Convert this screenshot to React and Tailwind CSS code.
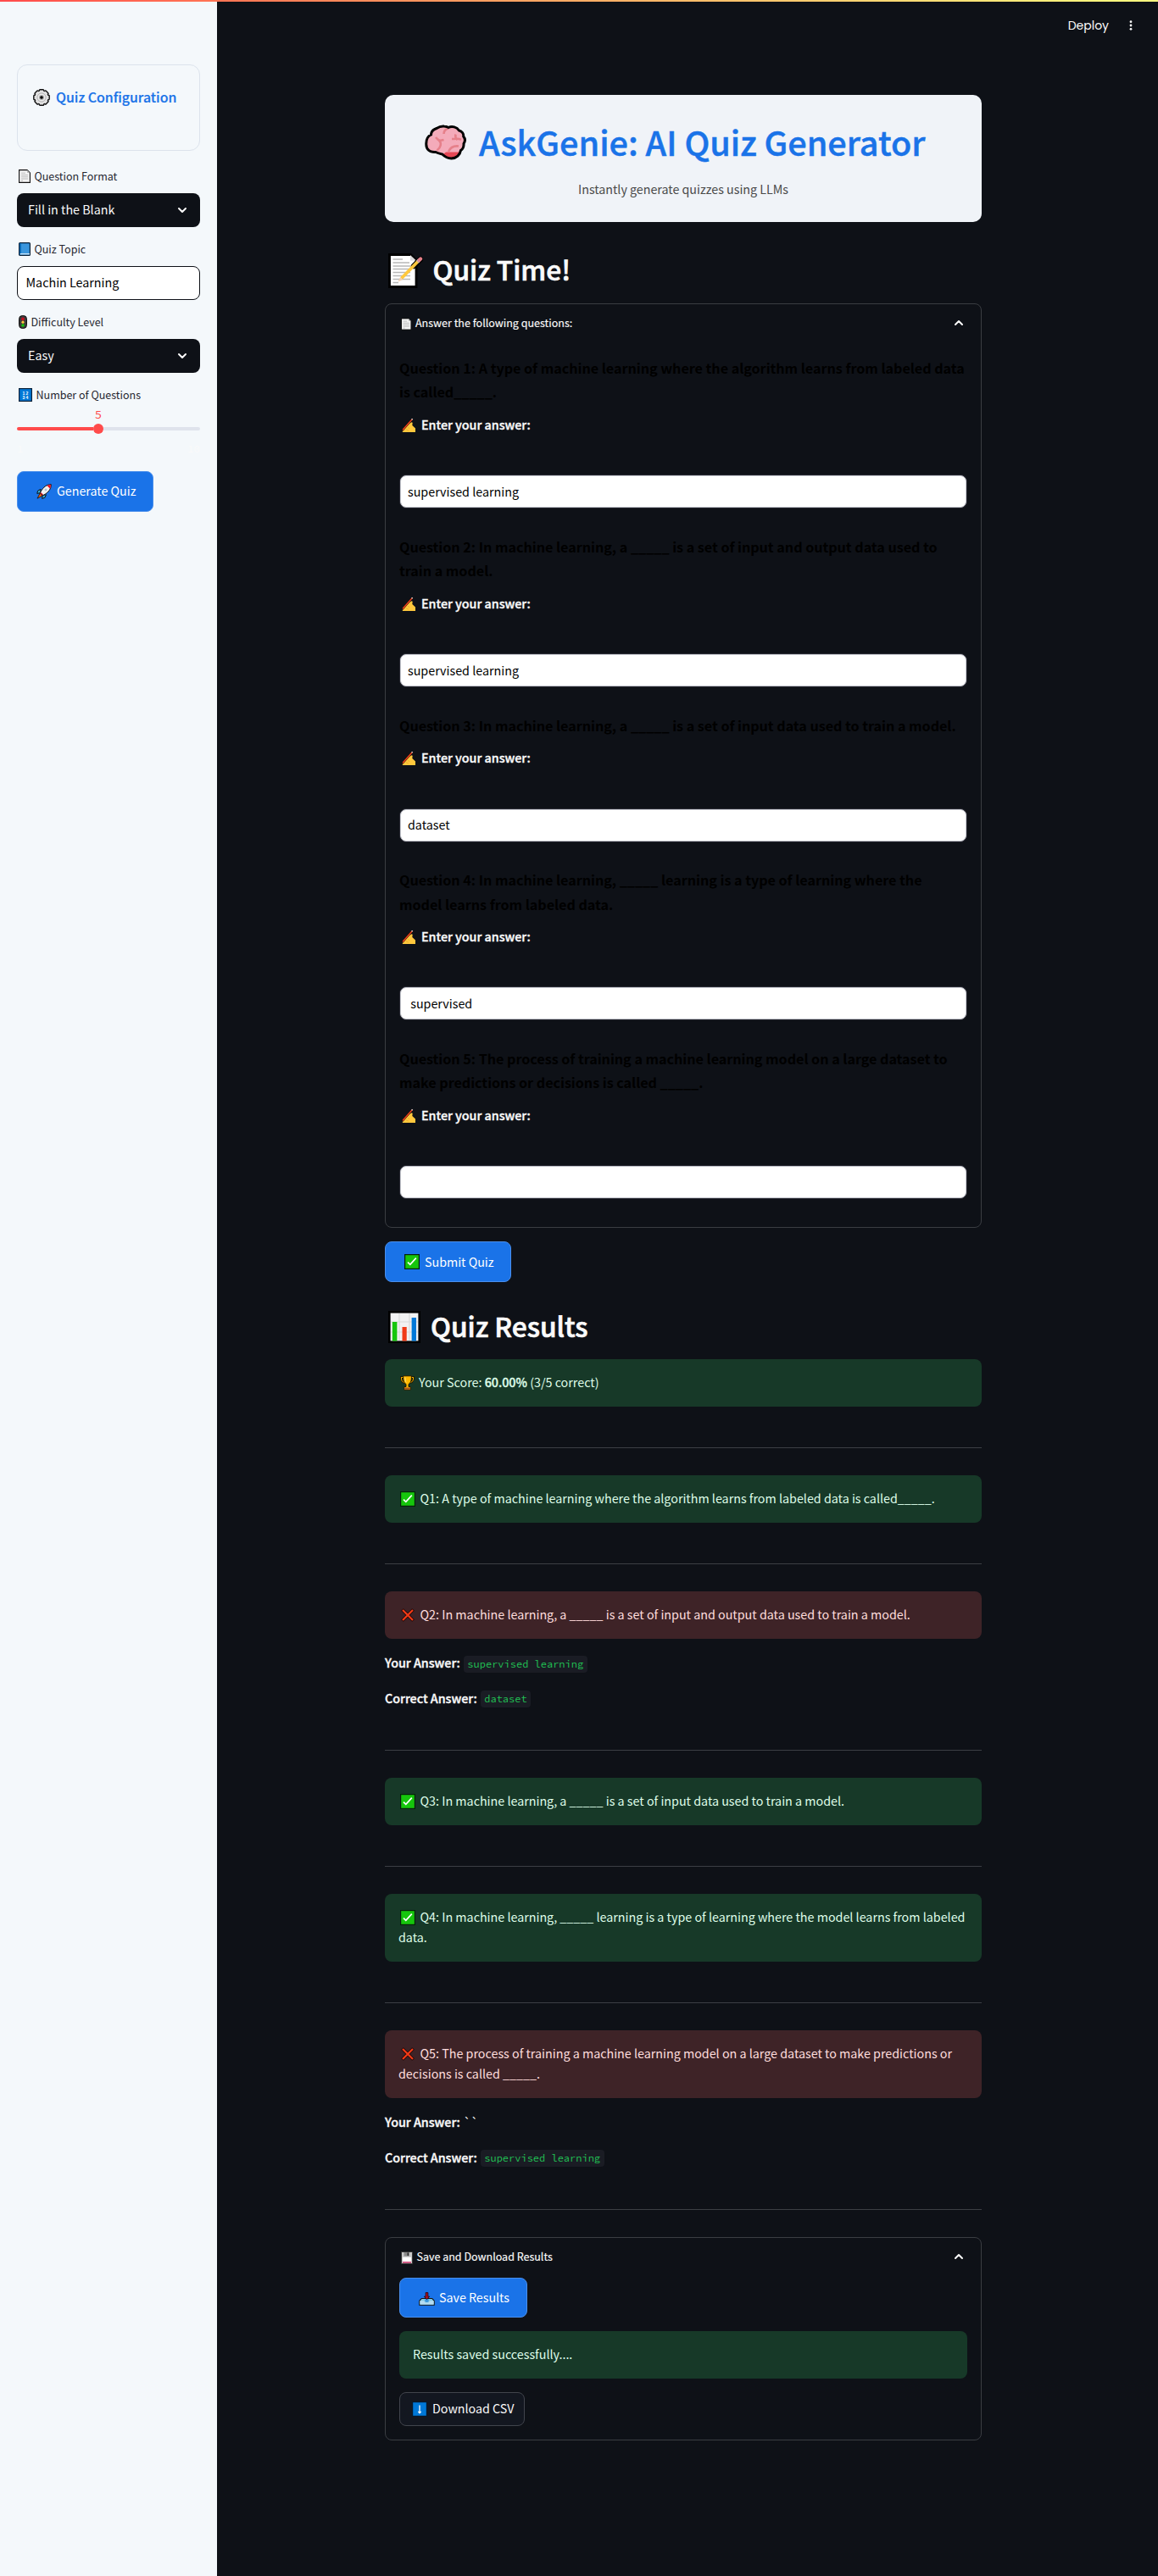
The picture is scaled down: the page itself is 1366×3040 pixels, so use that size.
import { ChevronDown, ChevronUp } from "lucide-react";

function GearIcon({ className }) {
  const teeth = [0, 45, 90, 135, 180, 225, 270, 315];
  return (
    <svg viewBox="0 0 20 20" className={className}>
      <g stroke="#111" strokeWidth="1.4" fill="#e0e0e0">
        {teeth.map((a) => (
          <rect key={a} x="7.3" y="0.8" width="5.4" height="4" rx="1" transform={`rotate(${a} 10 10)`} />
        ))}
      </g>
      <circle cx="10" cy="10" r="7.7" fill="#e0e0e0" />
      <circle cx="10" cy="10" r="5" fill="#ececec" stroke="#9a9a9a" strokeWidth="0.7" />
      <circle cx="10" cy="10" r="3" fill="#aaa" />
      <circle cx="10" cy="10" r="1.8" fill="#000" />
    </svg>
  );
}

function PageIcon({ className }) {
  return (
    <svg viewBox="0 0 14 16" className={className}>
      <path d="M.6.6H10l3.4 3.4v11.4H.6z" fill="#f4f4f4" stroke="#111" strokeWidth="1.1" />
      <path d="M10 .8V4h3.2z" fill="#bbb" />
      <path d="M3 4.2h5M3 6.6h8M3 8.8h8M3 11h8M3 13.2h2" stroke="#b3b3b3" strokeWidth=".9" />
    </svg>
  );
}

function BookIcon({ className }) {
  return (
    <svg viewBox="0 0 14 16" className={className}>
      <rect x=".6" y=".6" width="12.8" height="14.8" rx="1" fill="#3a96dd" stroke="#0b2239" strokeWidth="1.2" />
      <path d="M1.2 1.2h1.6V13H1.2z" fill="#0063b1" />
      <path d="M2 13.700h11" stroke="#d8ecfa" strokeWidth="1.2" />
    </svg>
  );
}

function TrafficIcon({ className }) {
  return (
    <svg viewBox="0 0 10 16" className={className}>
      <rect x=".5" y=".5" width="9" height="15" rx="4" fill="#3b3b3b" stroke="#111" />
      <circle cx="5" cy="4.4" r="1.9" fill="#c50f1f" />
      <circle cx="5" cy="8.2" r="1.6" fill="#ffc83d" />
      <circle cx="5" cy="12" r="1.8" fill="#16c60c" />
    </svg>
  );
}

function NumbersIcon({ className }) {
  return (
    <svg viewBox="0 0 16 16" className={className}>
      <rect x=".6" y=".6" width="14.8" height="14.8" fill="#0078d7" stroke="#0b2239" strokeWidth="1.2" />
      <g fill="#fff" fontFamily="Liberation Sans" fontSize="5" fontWeight="700">
        <text x="4.6" y="7.6">1</text>
        <text x="8.6" y="7.6">2</text>
        <text x="4.6" y="12.8">3</text>
        <text x="8.6" y="12.8">4</text>
      </g>
    </svg>
  );
}

function RocketIcon({ className }) {
  return (
    <svg viewBox="0 0 18 18" className={className}>
      <path d="M5 6.4 1.6 8.2.8 11.4l4-.8zM11.4 12.8 9.8 16.4l-3.2.9.8-4z" fill="#31b5e8" stroke="#111" strokeWidth="1" />
      <path d="M4.2 11 1 17.2l6-3.2z" fill="#f7630c" stroke="#111" strokeWidth=".8" />
      <path d="M17.3.7c-5 0-9 2.600-12.800 9.500l3.400 3.400C14.900 9.700 17.300 5.700 17.300.7z" fill="#f2f2f2" stroke="#111" strokeWidth="1" />
      <path d="M17 1c-1.700 0-3.300.3-4.700.9l3.800 3.800C16.700 4.200 17 2.700 17 1z" fill="#e81224" />
      <circle cx="11" cy="7" r="1.500" fill="#b4c6d1" />
      <path d="m5 10.600 2.500 2.500" stroke="#e81224" strokeWidth="1.200" />
    </svg>
  );
}

function BrainIcon({ className }) {
  return (
    <svg viewBox="0 0 49 42" className={className}>
      <path d="M14 4.500C17 2.500 20 1.600 23 2c2.500.2 4 .6 5 1.500 4-2 10-.8 12.500 3.500 3.500.8 5.500 4 5.200 7 2.200 2.600 2 6 .3 8.500.3 4-1 6.500-3.500 8-.8 5-5 9.300-11 9.500-5.200-.2-8.200-2.500-10.500-4.800C17 34 15 33.500 13 32.500 6 33 1.800 29.500 1.800 23.500c-.3-6 1.200-9.500 5.700-11.500C7.500 9 10 5.800 14 4.500z" fill="#f4abba" />
      <path d="M25 32.500h17.500c-1.500 4.500-5.500 7.500-11 7.500-5 0-8-2-10.200-4.400z" fill="#e74856" />
      <g fill="none" stroke="#e6808a" strokeWidth="2.600">
        <path d="M22.500 11c0-3 2-5.500 5.500-6.500M13 15c3.500 4.800 6 4 9.500 3M16.500 18c4 4 2.500 9-2 12.500M32 17c5 .3 7-1.500 11 .8M36.500 11.500c-1 3 0 4.500 2 6.500M28 32c2-4.500 6-7.200 12-6.500" />
      </g>
      <path d="M14 4.500C17 2.500 20 1.600 23 2c2.500.2 4 .6 5 1.500 4-2 10-.8 12.500 3.500 3.500.8 5.500 4 5.200 7 2.200 2.600 2 6 .3 8.500.3 4-1 6.500-3.500 8-.8 5-5 9.300-11 9.500-5.200-.2-8.200-2.500-10.500-4.800C17 34 15 33.500 13 32.500 6 33 1.800 29.500 1.800 23.500c-.3-6 1.200-9.500 5.700-11.500C7.500 9 10 5.800 14 4.500z" fill="none" stroke="#000" strokeWidth="3" />
    </svg>
  );
}

function MemoIcon({ className }) {
  return (
    <svg viewBox="0 0 41 41" className={className}>
      <path d="M1.500 1.500H26.500l6.500 6.500v31.500H1.500z" fill="#fff" stroke="#000" strokeWidth="2.800" />
      <path d="M26 2v6.500h7z" fill="#ddd" />
      <path d="M5.500 7H17M5.500 11H25M5.500 15H26M5.500 18.500H26M5.500 22.500H26M5.500 26.500H26M5.500 30.500H26M5.500 34.500H12" stroke="#b8b8b8" strokeWidth="1.300" />
      <path d="M38 7 30 15" stroke="#000" strokeWidth="6.500" strokeLinecap="round" />
      <path d="M36 8.500 15.500 29.500" stroke="#ffc83d" strokeWidth="3.800" />
      <path d="m11.500 33.500 2.600-5.500 3 3z" fill="#f3d0b0" />
      <path d="m34.500 10 2-2" stroke="#b8b8b8" strokeWidth="4" />
      <path d="m36.500 8 1.600-1.600" stroke="#e6808a" strokeWidth="4.200" strokeLinecap="round" />
    </svg>
  );
}

function HandIcon({ className }) {
  return (
    <svg viewBox="0 0 18 18" className={className}>
      <path d="M2 13 9 5.500l1.800 1L12 5.200l1.700.6-.4 3.200 3.700 3.500V17H1.800z" fill="#ffc83d" />
      <path d="m6 13.500 3 1.800M8 11.300l2.200 1.500" stroke="#e8a92a" strokeWidth=".8" />
      <path d="M13.400 1.500 1.600 15" stroke="#000" strokeWidth="2.200" />
      <path d="M13.200 1.800 2 14.600" stroke="#f0401c" strokeWidth="1.500" />
      <path d="m13.600 1.300-.9 1.100" stroke="#ddd" strokeWidth="1.500" />
    </svg>
  );
}

function CheckIcon({ className }) {
  return (
    <svg viewBox="0 0 18 18" className={className}>
      <rect x=".6" y=".6" width="16.800" height="16.800" fill="#16c60c" stroke="#06210a" strokeWidth="1.200" />
      <path d="m4 9.600 2.800 2.700 7-7.600" fill="none" stroke="#fff" strokeWidth="1.700" />
    </svg>
  );
}

function CrossIcon({ className }) {
  return (
    <svg viewBox="0 0 18 18" className={className}>
      <path d="m2.500 2.500 13 13M15.500 2.500l-13 13" stroke="#1a0505" strokeWidth="3.800" />
      <path d="m3 3 12 12M15 3 3 15" stroke="#f03a17" strokeWidth="2.300" />
    </svg>
  );
}

function ChartIcon({ className }) {
  return (
    <svg viewBox="0 0 38 38" className={className}>
      <rect x="1.300" y="1.300" width="35.400" height="35.400" fill="#f2f2f2" stroke="#000" strokeWidth="2.600" />
      <path d="M13 3v32M25 3v32M3 13h32M3 25h32" stroke="#dadada" strokeWidth="1.200" />
      <rect x="4.800" y="13" width="5.600" height="22.500" fill="#16c60c" />
      <rect x="16.500" y="19" width="5.200" height="16.500" fill="#f03a17" />
      <rect x="27.600" y="8" width="5.400" height="27.500" fill="#0078d7" />
    </svg>
  );
}

function TrophyIcon({ className }) {
  return (
    <svg viewBox="0 0 17 18" className={className}>
      <path d="M4 2.500H1.400c0 3.500 1 5.500 3.600 6M13 2.500h2.600c0 3.500-1 5.500-3.600 6" fill="none" stroke="#1a1200" strokeWidth="2.400" />
      <path d="M4 2.500H1.400c0 3.500 1 5.500 3.600 6M13 2.500h2.600c0 3.500-1 5.500-3.600 6" fill="none" stroke="#ffb900" strokeWidth="1" />
      <path d="M3.600.8h9.800c0 5-.4 8.200-3.400 9.700v3h2.200v3.700H4.800v-3.700H7v-3C4 9 3.600 5.800 3.600.8z" fill="#ffb900" stroke="#1a1200" strokeWidth=".9" />
      <path d="M5 14.500h7v2.300H5z" fill="#a4551e" />
      <path d="M6 2.500c0 3 .3 5 1.200 6" stroke="#ffe28a" fill="none" />
    </svg>
  );
}

function FloppyIcon({ className }) {
  return (
    <svg viewBox="0 0 14 15" className={className}>
      <path d="M.5.500H13l.5.800v13.200H.5z" fill="#c8c8c8" stroke="#333" />
      <path d="M3.500 1h6.500v4.500H3.500z" fill="#8a8a8a" />
      <path d="M7.500 1.500H9V5H7.500z" fill="#333" />
      <path d="M2 6.800h10v5.200H2z" fill="#fff" />
      <path d="M2 12h10v1.600H2z" fill="#d13f76" />
    </svg>
  );
}

function InboxIcon({ className }) {
  return (
    <svg viewBox="0 0 19 16" className={className}>
      <path d="m3.300 7.500-2.500 2.800v4.900h17.400v-4.900l-2.500-2.800z" fill="#83cbe8" stroke="#111" strokeWidth="1.100" />
      <path d="M1.400 10.300h4.800l1 2h4.600l1-2h4.800v4.300H1.400z" fill="#b4dcf2" />
      <circle cx="9.500" cy="9.700" r="2.300" fill="#3a96dd" />
      <path d="M8.100.6h2.800v4.600h1.800L9.500 8.500 6.300 5.200h1.800z" fill="#a80d1c" stroke="#2a0004" strokeWidth=".8" />
    </svg>
  );
}

function DownIcon({ className }) {
  return (
    <svg viewBox="0 0 18 18" className={className}>
      <rect x=".6" y=".6" width="16.800" height="16.800" fill="#0078d7" stroke="#06182b" strokeWidth="1.200" />
      <path d="M9 4.500v9M7.300 11.900 9 13.700l1.700-1.800" fill="none" stroke="#fff" strokeWidth="1.300" />
    </svg>
  );
}

const questions = [
  { n: 1, text: "A type of machine learning where the algorithm learns from labeled data is called_____.", value: "supervised learning", ok: true },
  { n: 2, text: "In machine learning, a _____ is a set of input and output data used to train a model.", value: "supervised learning", ok: false, answer: "dataset" },
  { n: 3, text: "In machine learning, a _____ is a set of input data used to train a model.", value: "dataset", ok: true },
  { n: 4, text: "In machine learning, _____ learning is a type of learning where the model learns from labeled data.", value: "\u00a0supervised", ok: true },
  { n: 5, text: "The process of training a machine learning model on a large dataset to make predictions or decisions is called _____.", value: "", ok: false, answer: "supervised learning" },
];

function SelectBox({ children }) {
  return (
    <div className="flex h-10 items-center justify-between rounded-lg bg-[#0e1117] px-[13px] text-[14.3px] text-[#fafafa]">
      <span className="pb-[2px]">{children}</span>
      <ChevronDown className="h-4 w-4" strokeWidth={3} />
    </div>
  );
}

function Label({ icon, children }) {
  return (
    <div className="flex h-[22px] items-center gap-[5px] pl-[1.5px] text-[12.5px] text-[#262730]">
      {icon}
      <span>{children}</span>
    </div>
  );
}

function Sidebar() {
  return (
    <aside className="w-64 shrink-0 bg-[#f4f8fb] px-5 pt-[76px]">
      <div className="h-[102px] rounded-xl border border-[#dce3ec] pt-[26px] pl-[18px]">
        <div className="flex h-[24px] items-center gap-[7px] text-[15.9px] font-medium whitespace-nowrap text-[#1a73e8] [-webkit-text-stroke:0.2px]">
          <GearIcon className="h-5 w-5" />
          <span className="pb-px">Quiz Configuration</span>
        </div>
      </div>
      <div className="mt-[19px]">
        <Label icon={<PageIcon className="h-4 w-[14px]" />}>Question Format</Label>
      </div>
      <div className="mt-[9px]">
        <SelectBox>Fill in the Blank</SelectBox>
      </div>
      <div className="mt-[15px]">
        <Label icon={<BookIcon className="h-4 w-[14px]" />}>Quiz Topic</Label>
      </div>
      <div className="mt-[9px] flex h-10 items-center rounded-lg border border-[#0e1117] bg-white pl-[9.5px] text-[14.3px] text-black">
        <span className="pb-[2px]">Machin Learning</span>
      </div>
      <div className="mt-[15px]">
        <Label icon={<TrafficIcon className="h-4 w-[10px]" />}>Difficulty Level</Label>
      </div>
      <div className="mt-[9px]">
        <SelectBox>Easy</SelectBox>
      </div>
      <div className="mt-[15px]">
        <Label icon={<NumbersIcon className="h-4 w-4" />}>Number of Questions</Label>
      </div>
      <div className="mt-[2px] w-[192px] text-center font-['Source_Code_Pro','Noto_Sans_Mono_CJK_SC',monospace] text-[14px] leading-[20px] text-[#ff4b4b]">
        5
      </div>
      <div className="mt-[1px] flex h-3 items-center">
        <div className="h-1 w-[90px] rounded-l-full bg-[#ff4b4b]" />
        <div className="h-3 w-3 rounded-full bg-[#ff4b4b]" />
        <div className="h-1 flex-1 rounded-r-full bg-[#dfe3ec]" />
      </div>
      <div className="mt-[8px] flex h-[20px] items-center justify-between font-['Source_Code_Pro','Noto_Sans_Mono_CJK_SC',monospace] text-[12.500px] text-[#fafafa]">
        <span>1</span>
        <span>10</span>
      </div>
      <div className="mt-[16px] flex h-12 w-[161px] items-center gap-[6px] rounded-lg border border-[#4a8fec] bg-[#1a73e8] pl-[22px] text-[14.25px] text-white">
        <RocketIcon className="h-[18px] w-[18px]" />
        <span className="pb-[2px]">Generate Quiz</span>
      </div>
    </aside>
  );
}

function Question({ q }) {
  return (
    <div className="mb-[30.200px]">
      <p className="text-[16.1px] leading-[28.8px] font-bold text-black">
        Question {q.n}: {q.text}
      </p>
      <div className="mt-[13px] mb-[46.200px] flex h-6 items-center gap-[6px] pl-[2px] text-[14.300px] font-medium text-[#fafafa] [-webkit-text-stroke:0.350px]">
        <HandIcon className="h-[18px] w-[18px]" />
        <span className="pb-[3px]">Enter your answer:</span>
      </div>
      <div className="flex h-10 items-center rounded-lg border border-[#262730] bg-[#262730]">
        <div className="flex h-full w-full items-center rounded-[7px] border border-[#c9cbd2] bg-white pl-[8px] text-[14.300px] text-black">
          <span className="pb-[2px]">{q.value}</span>
        </div>
      </div>
    </div>
  );
}

function Alert({ ok, icon, children }) {
  return (
    <div
      className={
        ok
          ? "rounded-lg bg-[#173928] px-4 pt-[15px] pb-[17px] text-[14.3px] leading-6 text-[#dffde9]"
          : "rounded-lg bg-[#3e2327] px-4 pt-[15px] pb-[17px] text-[14.3px] leading-6 text-[#ffdede]"
      }
    >
      {icon}
      {children}
    </div>
  );
}

function Code({ children }) {
  return (
    <code className="ml-[4px] inline-flex h-[20px] items-center rounded bg-[#1a1c24] px-[4.500px] font-['Source_Code_Pro','Noto_Sans_Mono_CJK_SC',monospace] text-[12px] text-[#21c354]">
      {children}
    </code>
  );
}

function Result({ q }) {
  return (
    <>
      <Alert
        ok={q.ok}
        icon={
          q.ok ? (
            <CheckIcon className="mr-[5.500px] ml-[2px] inline-block h-[18px] w-[18px] align-[-3.500px]" />
          ) : (
            <CrossIcon className="mr-[5.500px] ml-[2px] inline-block h-[18px] w-[18px] align-[-3.500px]" />
          )
        }
      >
        Q{q.n}: {q.text}
      </Alert>
      {q.ok ? (
        <hr className="mt-12 mb-8 border-t border-[#3c3f44]" />
      ) : (
        <>
          <div className="mt-4 flex h-[27px] items-center text-[14.300px] text-[#fafafa]">
            <span className="pb-[3px] font-medium [-webkit-text-stroke:0.350px]">Your Answer:</span>
            {q.value ? <Code>{q.value}</Code> : <span className="ml-[4px] pb-[3px]">``</span>}
          </div>
          <div className="mt-[15px] flex h-[26px] items-center text-[14.300px] text-[#fafafa]">
            <span className="pb-[2px] font-medium [-webkit-text-stroke:0.350px]">Correct Answer:</span>
            <Code>{q.answer}</Code>
          </div>
          <hr className="mt-[47px] mb-8 border-t border-[#3c3f44]" />
        </>
      )}
    </>
  );
}

function SummaryRow({ icon, children }) {
  return (
    <div className="flex h-[46px] items-center gap-[5px] pr-[19px] pl-[17.5px] text-[12.5px] text-[#fafafa] [-webkit-text-stroke:0.15px]">
      {icon}
      <span className="flex-1 pb-[2px]">{children}</span>
      <ChevronUp className="-mr-[1px] mb-[2px] h-4 w-4" strokeWidth={3} />
    </div>
  );
}

export default function App() {
  return (
    <div className="relative flex h-[3040px] w-[1366px] overflow-hidden bg-[#0e1117] font-['Noto_Sans_CJK_SC','Open_Sans',sans-serif]">
      <div className="absolute top-0 left-0 h-[2px] w-full bg-linear-to-r from-[#ff4b4b] to-[#fffd80]" />
      <Sidebar />
      <main className="flex-1">
        <header className="flex h-[60px] items-center justify-end pr-[30px] text-[#fafafa]">
          <span className="font-['Poppins','Inter',sans-serif] text-[14px]">Deploy</span>
          <svg viewBox="0 0 4 12" className="ml-[24px] h-3 w-1" fill="#fafafa">
            <circle cx="2" cy="1.700" r="1.400" />
            <circle cx="2" cy="6" r="1.400" />
            <circle cx="2" cy="10.300" r="1.400" />
          </svg>
        </header>
        <div className="ml-[198px] w-[704px] pt-[52px]">
          <section className="h-[150px] rounded-[10px] bg-[#f0f3f8] pt-[26px]">
            <div className="flex h-[60px] items-center gap-[15px] pl-[47px] text-[39.600px] font-medium whitespace-nowrap text-[#1a73e8] [-webkit-text-stroke:0.500px]">
              <BrainIcon className="h-[42px] w-[49px]" />
              <h1 className="pb-[3px]">AskGenie: AI Quiz Generator</h1>
            </div>
            <p className="mt-[13px] text-center text-[14.250px] leading-6 text-[#4a4a4a]">Instantly generate quizzes using LLMs</p>
          </section>

          <div className="mt-[34px] flex h-[46px] items-center gap-[11.500px] pl-[4px] text-[31.700px] font-medium text-[#fafafa] [-webkit-text-stroke:0.700px]">
            <MemoIcon className="h-[41px] w-[41px]" />
            <h2 className="pb-[3px]">Quiz Time!</h2>
          </div>

          <section className="mt-[16px] h-[1091px] rounded-lg border border-[#3a3d42]">
            <SummaryRow icon={<PageIcon className="h-[15px] w-[12.500px]" />}>Answer the following questions:</SummaryRow>
            <div className="px-4 pt-[14.600px]">
              {questions.map((q) => (
                <Question key={q.n} q={q} />
              ))}
            </div>
          </section>

          <div className="mt-4 flex h-12 w-[149px] items-center gap-[6px] rounded-lg border border-[#4a8fec] bg-[#1a73e8] pl-[22px] text-[14.250px] text-white">
            <CheckIcon className="h-[18px] w-[18px]" />
            <span className="pb-px">Submit Quiz</span>
          </div>

          <div className="mt-[30px] flex h-[46px] items-center gap-[12px] pl-[4px] text-[31.700px] font-medium text-[#fafafa] [-webkit-text-stroke:0.700px]">
            <ChartIcon className="h-[38px] w-[38px]" />
            <h2 className="pb-[3px]">Quiz Results</h2>
          </div>

          <div className="mt-[15px]">
            <Alert ok icon={<TrophyIcon className="mr-[5px] ml-[2px] inline-block h-[18px] w-[17px] align-[-3.500px]" />}>
              Your Score: <strong className="font-medium [-webkit-text-stroke:0.350px]">60.00%</strong> (3/5 correct)
            </Alert>
            <hr className="mt-12 mb-8 border-t border-[#3c3f44]" />
            {questions.map((q) => (
              <Result key={q.n} q={q} />
            ))}
          </div>

          <section className="h-[240px] rounded-lg border border-[#3a3d42]">
            <SummaryRow icon={<FloppyIcon className="h-[15px] w-[14px]" />}>Save and Download Results</SummaryRow>
            <div className="flex flex-col items-start gap-4 px-4 pt-px">
              <div className="flex h-[47px] w-[151px] items-center gap-[5px] rounded-lg border border-[#4a8fec] bg-[#1a73e8] pl-[22px] text-[14.250px] text-white">
                <InboxIcon className="mt-[3px] h-[16px] w-[19px]" />
                <span className="pb-px">Save Results</span>
              </div>
              <div className="w-full">
                <Alert ok>Results saved successfully....</Alert>
              </div>
              <div className="flex h-10 w-[148px] items-center gap-[6px] rounded-lg border border-[#41444c] bg-[#131720] pl-[14px] text-[14.250px] text-[#fafafa]">
                <DownIcon className="h-[18px] w-[18px]" />
                <span className="pb-[2px]">Download CSV</span>
              </div>
            </div>
          </section>
        </div>
      </main>
    </div>
  );
}
